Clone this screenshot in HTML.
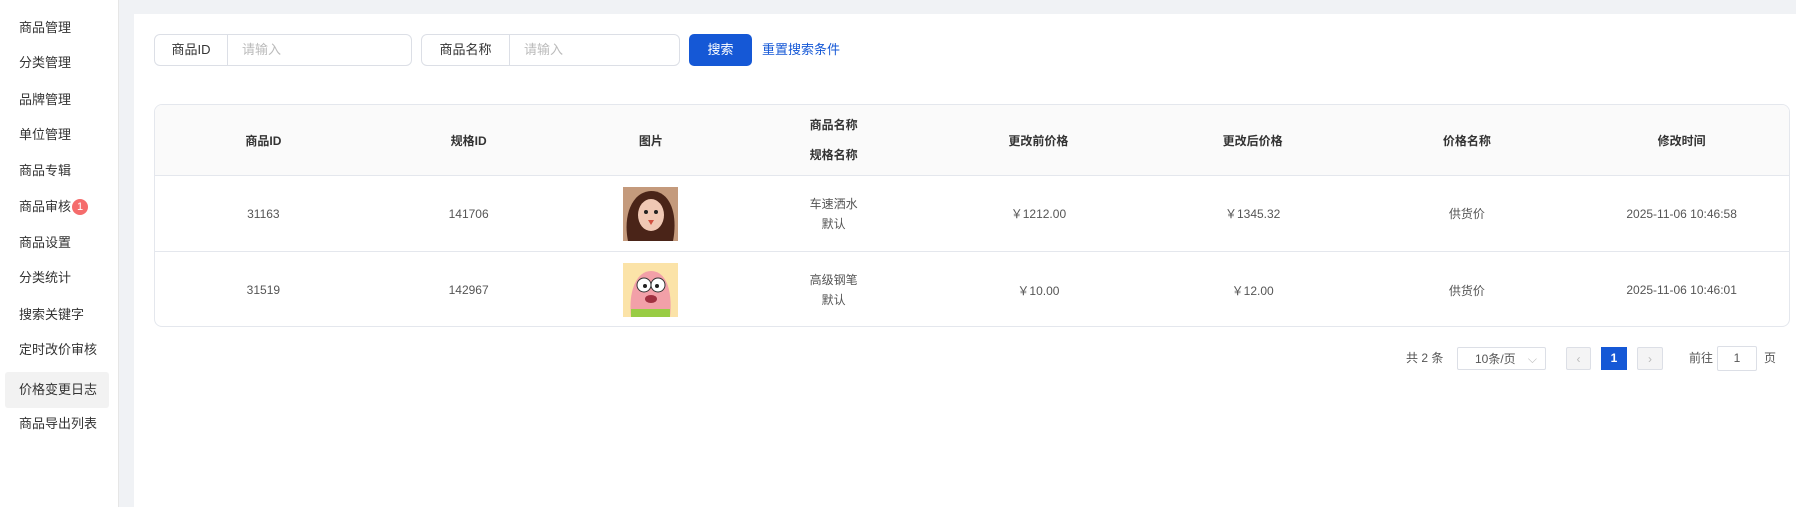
<!DOCTYPE html>
<html><head><meta charset="utf-8"><style>
*{box-sizing:border-box;margin:0;padding:0}
body{width:1796px;height:507px;background:#f0f2f5;font-family:"Liberation Sans","Noto Sans CJK SC",sans-serif;font-size:13px;color:#333;position:relative;overflow:hidden}
.side{position:absolute;left:0;top:0;width:119px;height:507px;background:#fff;border-right:1px solid #e6e6e6}
.side div{position:absolute;left:5px;width:104px;height:36px;line-height:36px;padding-left:14px;font-size:13px;color:#333;border-radius:3px}
.side .act{background:#f2f2f2}
.badge{display:inline-block;width:16px;height:16px;border-radius:50%;background:#f56c6c;color:#fff;font-size:11px;line-height:16px;text-align:center;vertical-align:1px;margin-left:1px}
.main{position:absolute;left:134px;top:14px;width:1662px;height:493px;background:#fff}
.inp{position:absolute;top:34px;height:32px;border:1px solid #dcdfe6;border-radius:6px;display:flex;font-size:13px}
.inp .l{border-right:1px solid #dcdfe6;line-height:30px;text-align:center;color:#333}
.inp .p{line-height:30px;padding-left:14px;color:#bbb}
.btn{position:absolute;left:689px;top:34px;width:63px;height:32px;background:#1558d6;color:#fff;border-radius:5px;text-align:center;line-height:32px}
.link{position:absolute;left:762px;top:34px;line-height:32px;color:#1558d6}
.tbl{position:absolute;left:154px;top:104px;width:1636px;height:223px;border:1px solid #e4e7ed;border-radius:8px;overflow:hidden;font-size:12px}
.row{position:absolute;left:0;width:100%;display:flex;border-bottom:1px solid #e4e7ed}
.row div{text-align:center;display:flex;align-items:center;justify-content:center;flex-direction:column;color:#555}
.hd{top:0;height:71px;background:#fafafa}
.hd div{font-weight:bold;color:#333}
.c1{width:217px}.c2{width:194px}.c3{width:171px}.c4{width:195px}.c5{width:215px}.c6{width:214px}.c7{width:215px}.c8{width:215px}
.pic{width:55px;height:54px}
.pg{position:absolute;top:347px;height:23px;line-height:23px;font-size:12px;color:#555}
.bx{border:1px solid #dcdfe6;border-radius:2px;text-align:center}
</style></head><body>
<div class="side">
<div style="top:10px">商品管理</div>
<div style="top:45px">分类管理</div>
<div style="top:82px">品牌管理</div>
<div style="top:117px">单位管理</div>
<div style="top:153px">商品专辑</div>
<div style="top:189px">商品审核<span class="badge">1</span></div>
<div style="top:225px">商品设置</div>
<div style="top:260px">分类统计</div>
<div style="top:297px">搜索关键字</div>
<div style="top:332px">定时改价审核</div>
<div class="act" style="top:372px">价格变更日志</div>
<div style="top:406px">商品导出列表</div>
</div>
<div style="position:absolute;left:119px;top:0;width:1677px;height:14px;background:#f0f2f5"></div>
<div class="main" style="left:134px"></div>
<div class="inp" style="left:154px;width:258px"><div class="l" style="width:73px">商品ID</div><div class="p">请输入</div></div>
<div class="inp" style="left:421px;width:259px"><div class="l" style="width:88px">商品名称</div><div class="p">请输入</div></div>
<div class="btn">搜索</div>
<div class="link">重置搜索条件</div>
<div class="tbl">
<div class="row hd"><div class="c1">商品ID</div><div class="c2">规格ID</div><div class="c3">图片</div><div class="c4" style="line-height:30px">商品名称<br>规格名称</div><div class="c5">更改前价格</div><div class="c6">更改后价格</div><div class="c7">价格名称</div><div class="c8">修改时间</div></div>
<div class="row" style="top:71px;height:76px"><div class="c1">31163</div><div class="c2">141706</div><div class="c3"><svg class="pic" viewBox="0 0 55 54"><rect width="55" height="54" fill="#c49a7c"/><path d="M5 54 C0 30 8 5 28 4 C48 4 55 28 50 54Z" fill="#4a2418"/><ellipse cx="28" cy="28" rx="13" ry="16" fill="#f0c8b4"/><circle cx="23" cy="25" r="2" fill="#222"/><circle cx="33" cy="25" r="2" fill="#222"/><path d="M25 33 L31 33 L28 38Z" fill="#d05040"/></svg></div><div class="c4" style="line-height:20px">车速洒水<br>默认</div><div class="c5">￥1212.00</div><div class="c6">￥1345.32</div><div class="c7">供货价</div><div class="c8">2025-11-06 10:46:58</div></div>
<div class="row" style="top:147px;height:76px;border-bottom:none"><div class="c1">31519</div><div class="c2">142967</div><div class="c3"><svg class="pic" viewBox="0 0 55 54"><rect width="55" height="54" fill="#fbe3a8"/><path d="M8 54 C5 25 15 8 28 8 C42 8 50 25 47 54Z" fill="#f2a0a8"/><circle cx="21" cy="22" r="7" fill="#fff" stroke="#333"/><circle cx="35" cy="22" r="7" fill="#fff" stroke="#333"/><circle cx="22" cy="23" r="2" fill="#222"/><circle cx="34" cy="23" r="2" fill="#222"/><ellipse cx="28" cy="36" rx="6" ry="4" fill="#a03040"/><rect x="8" y="46" width="39" height="8" fill="#9c4"/></svg></div><div class="c4" style="line-height:20px">高级钢笔<br>默认</div><div class="c5">￥10.00</div><div class="c6">￥12.00</div><div class="c7">供货价</div><div class="c8">2025-11-06 10:46:01</div></div>
</div>
<div class="pg" style="left:1406px">共 2 条</div>
<div class="pg bx" style="left:1457px;width:89px;text-align:left;padding-left:17px">10条/页<span style="position:absolute;right:8px;color:#bbb">⌵</span></div>
<div class="pg bx" style="left:1566px;width:25px;background:#f4f4f5;color:#bbb">‹</div>
<div class="pg" style="left:1601px;width:26px;background:#1558d6;color:#fff;text-align:center;font-weight:bold">1</div>
<div class="pg bx" style="left:1637px;width:26px;background:#f4f4f5;color:#bbb">›</div>
<div class="pg" style="left:1689px">前往</div>
<div class="pg bx" style="left:1717px;width:40px;height:25px;top:346px">1</div>
<div class="pg" style="left:1764px">页</div>
</body></html>
